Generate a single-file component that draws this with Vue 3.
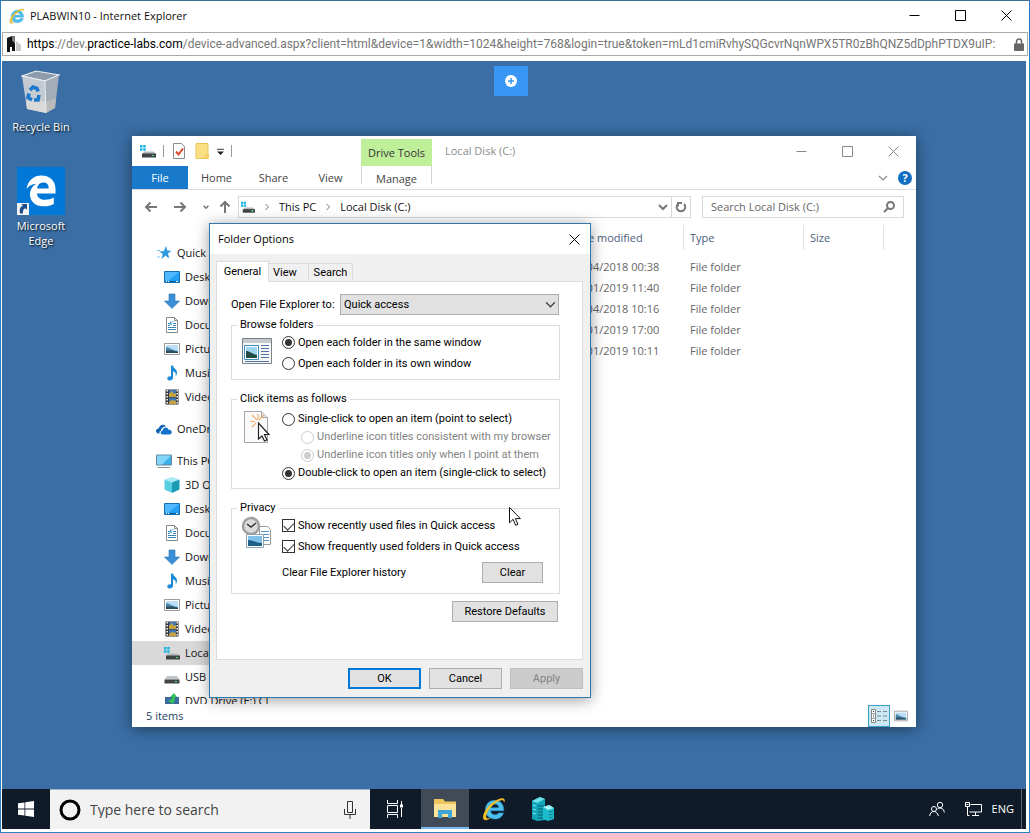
<template>
  <div class="browser">
    <svg class="sprite" aria-hidden="true">
      <symbol id="i-ie" viewBox="1 1.500 22 21">
        <path d="M21 13.600H8.900c.2 2.300 1.800 3.700 4 3.700 1.500 0 2.600-.6 3.200-1.700h4.600c-1 3.400-4 5.600-8 5.600-5 0-8.600-3.500-8.600-8.500S7.800 4 12.700 4s8.400 3.700 8.300 9.600zM8.900 10.800h7.600c-.2-2-1.700-3.300-3.700-3.300s-3.500 1.300-3.900 3.300z" fill="#4cc0ee" stroke="#2a93c9" stroke-width=".5" />
        <path d="M21.500 5.500c.6-2.200-.4-3.500-2.700-3.100C14 3.200 6.500 8.600 3.600 14.600c-2.100 4.200-1.900 7.300.6 7.400 1.300 0 2.700-.6 4-1.600-4 1.300-4.300-1.500-2.500-5.300C8.300 9.800 14.700 4.400 18.800 3.700c1.300-.2 2.200.3 2.700 1.800z" fill="#f6c62d" stroke="#e0ac22" stroke-width=".5" />
      </symbol>
      <symbol id="i-star" viewBox="0 0 16 16">
        <path d="M10 1l1.300 4.500 4.200.3-3.500 2.700 1.300 4.900-3.900-2.600-4 3.200 1.300-5-3.300-2.600 4.400-.4z" fill="#2f9ae0" />
        <path d="M1 5.500h3M1 12h3" stroke="#7cc0ee" />
      </symbol>
      <symbol id="i-desktop" viewBox="0 0 16 16">
        <path d="M.5 2.500h15v11H.5z" fill="#1fa0f5" stroke="#1672b8" />
        <path d="M1 3h14L3 13H1z" fill="#4db8ff" />
        <path d="M1 12.500h14" stroke="#0a5c9f" /><path d="M2 12.500h1m1 0h1m7 0h2" stroke="#fff" />
      </symbol>
      <symbol id="i-down" viewBox="0 0 16 16">
        <path d="M5 1h6v7h4.500L8 15.500.5 8H5z" fill="#3b8fd6" stroke="#2a73b5" stroke-width=".6" />
      </symbol>
      <symbol id="i-docs" viewBox="0 0 16 16">
        <path d="M2.500.5h8l3 3v12h-11z" fill="#fff" stroke="#8a8a8a" />
        <path d="M10.500.5v3h3" fill="none" stroke="#8a8a8a" />
        <path d="M4 6.500h2M4 8.500h2M4 10.500h8M4 12.500h8M8.500 4.500h1M9 6.500h3M9 8.500h3" stroke="#3a87b8" />
        <path d="M5 7l2-3 1 4z" fill="#2e9ad2" />
      </symbol>
      <symbol id="i-pics" viewBox="0 0 16 16">
        <path d="M.5 2.500h15v11H.5z" fill="#fff" stroke="#9b9b9b" />
        <path d="M2 4h12v8H2z" fill="#b9def5" />
        <path d="M2 6c3 0 5 3 12 4v2H2z" fill="#4d86ac" /><path d="M2 10c4-1 8 0 12 1v1H2z" fill="#2a4c5b" />
      </symbol>
      <symbol id="i-music" viewBox="0 0 16 16">
        <path d="M7 .5h2c.4 3 4.500 3.500 4 8-.2 1.200-.6 2-1.300 2.700.7-3-.7-4.200-2.700-4.600V13c0 1.600-1.800 2.700-3.600 2.500C3.700 15.300 3 14.300 3.300 13c.4-1.500 2.200-2.200 3.700-1.700z" fill="#1d8bd8" />
      </symbol>
      <symbol id="i-video" viewBox="0 0 16 16">
        <path d="M1.500.5h13v15h-13z" fill="#333" />
        <path d="M5 1h7v7H5zM5 8.500h7V15H5z" fill="#4176b3" />
        <path d="M5 5l3-3 2 3 2-1v4H5zM5 13l3-2 4 1v3H5z" fill="#c9a23f" />
        <path d="M3.200 1v14M13.200 1v14" stroke="#f2f2f2" stroke-width="1.600" stroke-dasharray="1.500 1.500" />
      </symbol>
      <symbol id="i-cloud" viewBox="0 0 16 16">
        <path d="M2 12.500c-3-1-2.400-4.800.7-5C3.500 3.500 8 2.500 10 5.500 7 5.500 5 7.500 5 9.500c-1.500.6-2 2-1.300 3z" fill="#0f62b5" />
        <path d="M6.500 13.500c-2.600-.6-2.400-3.800.2-4C7 6 11.500 5.500 12.500 8.700c3.600-.6 4.600 4.300 1 4.800z" fill="#1272cc" />
      </symbol>
      <symbol id="i-pc" viewBox="0 0 16 16">
        <path d="M.5 2h15v10H.5z" fill="#3cb2ea" stroke="#68839a" />
        <path d="M1 2.500h14L6 11.500H1z" fill="#85d5f8" />
        <path d="M2 14.500h12" stroke="#8195a6" />
      </symbol>
      <symbol id="i-cube" viewBox="0 0 16 16">
        <path d="M8 0l7.500 2.500L8 5.500.5 2.500z" fill="#a8ecf3" />
        <path d="M.5 2.500L8 5.500V16L.5 12.500z" fill="#58cfe0" /><path d="M15.500 2.500L8 5.500V16l7.500-3.500z" fill="#1a9ab3" />
      </symbol>
      <symbol id="i-drive" viewBox="0 0 16 16">
        <path d="M0 2h2.500v2.500H0zM3.200 2h2.500v2.500H3.200zM0 5.200h2.500v2.500H0zM3.200 5.200h2.500v2.500H3.200z" fill="#19b5e5" />
        <path d="M4 8.500h9.500l2.500 2.500H2.500z" fill="#b3b7ba" /><path d="M2 10.500h14v4H2z" fill="#3d4245" />
        <path d="M12 12.500h2" stroke="#4be36a" />
      </symbol>
      <symbol id="i-usb" viewBox="0 0 16 16">
        <path d="M3 7h10l2.500 3.500H.5z" fill="#c2c5c7" /><path d="M.5 10.500h15v4H.5z" fill="#3f4447" />
        <path d="M11 12.500h2" stroke="#4be36a" />
      </symbol>
      <symbol id="i-dvd" viewBox="0 0 16 16">
        <path d="M1 4h14v11H1z" fill="#3b6c9d" /><path d="M10 0l3 4h-2c0 4-1 6-3 7L4 7h3l1-3H6z" fill="#34c159" />
      </symbol>
      <symbol id="i-chevron" viewBox="0 0 10 10">
        <path d="M1 3l4 4 4-4" fill="none" stroke="currentColor" stroke-width="1.200" />
      </symbol>
      <symbol id="i-cursor" viewBox="0 0 12 20">
        <path d="M.5.500v15.300l3.600-3.500 2.500 6 2.300-1-2.500-5.700h5z" fill="#fff" stroke="#111" />
      </symbol>
    </svg>

    <header class="titlebar">
      <svg class="ic16"><use href="#i-ie" /></svg>
      <h1 class="titlebar__text">PLABWIN10 - Internet Explorer</h1>
      <div class="captions">
        <button v-for="c in captions" :key="c.name" type="button" :aria-label="c.name">
          <svg viewBox="0 0 11 11"><path :d="c.path" /></svg>
        </button>
      </div>
    </header>

    <div class="address">
      <svg class="address__logo" viewBox="0 0 14 16">
        <path d="M0 2l5-2v4l3 3v8H5v-4H3v5H0z" fill="#111" /><path d="M5 0h3v7L5 4z" fill="#777" />
        <path d="M9 5l5 4v6H9z" fill="#c9c9c9" />
      </svg>
      <p class="address__url">
        <b>https</b>://dev.<b>practice-labs.com</b>/device-advanced.aspx?client=html&amp;device=1&amp;width=1024&amp;height=768&amp;login=true&amp;token=mLd1cmiRvhySQGcvrNqnWPX5TR0zBhQNZ5dDphPTDX9uIP:
      </p>
      <svg class="address__lock" viewBox="0 0 10 13">
        <path d="M2.500 6V3.500a2.500 2.500 0 015 0V6" fill="none" stroke="#666" stroke-width="1.500" />
        <path d="M0 5.500h10V12a1 1 0 01-1 1H1a1 1 0 01-1-1z" fill="#666" />
      </svg>
    </div>

    <main class="screen">
      <div class="desktop">
        <button class="connect" type="button" aria-label="Open menu">
          <svg viewBox="0 0 12 12"><circle cx="6" cy="6" r="6" fill="#fff" /><path d="M6 3v6M3 6h6" stroke="#3a96f5" stroke-width="1.500" /></svg>
        </button>

        <div class="shortcuts">
          <a class="shortcut" href="#bin">
            <svg class="shortcut__bin" viewBox="0 0 40 44">
              <path d="M1 6L15 1l23 4-14 6z" fill="#8e9cab" stroke="#e9eef2" stroke-width="1.200" />
              <path d="M1 6l23 5 1 32-19-4z" fill="#c3cad2" /><path d="M38 5L24 11l1 32 9-5z" fill="#a3adb7" />
              <path d="M5 31l8-2 12 3v11L6 39z" fill="#dedcdb" opacity=".8" /><path d="M25 32l10-4-1 10-9 5z" fill="#c1bfbd" opacity=".8" />
              <path d="M1 6l23 5 14-6M24 11l1 32" fill="none" stroke="#e9eef2" />
              <g fill="none" stroke="#1a79cd" stroke-width="3.600"><path d="M9 20l3-3 4 1.500 1 3" /><path d="M8 23.500l-1 4 4 2.500" /><path d="M18 25l-1 5h-4" /></g>
            </svg>
            <span>Recycle Bin</span>
          </a>
          <a class="shortcut" href="#edge">
            <svg class="shortcut__edge" viewBox="0 0 48 48">
              <path d="M0 0h48v48H0z" fill="#0078d7" />
              <path d="M9.500 22C11 13 17 8.500 24.500 8.500 33 8.500 38.500 14 38.500 22v4.500H20c.2 4.200 3.600 6.300 8.200 6.300 3.300 0 6.100-.7 8.600-2.200v6.300c-2.800 1.600-6.200 2.400-10.200 2.400-8.300 0-13.600-4.700-13.600-12 0-4.300 2.200-8.200 6.300-10.600-4.100.3-7.400 2-9.800 5.300zm10.700-.6h11.500c0-3.800-2-5.800-5.500-5.800-3.300 0-5.500 2.300-6 5.800z" fill="#fff" />
              <path d="M0 36h12v12H0z" fill="#f3f3f3" /><path d="M3 46.500c-1-4 0-6.500 3-8l-1.800-1.500H10v5.800l-1.700-1.600c-2 1-2.800 2.500-2.300 5.300z" fill="#1f4e8c" />
            </svg>
            <span>Microsoft Edge</span>
          </a>
        </div>

        <section class="explorer">
          <div class="explorer__title">
            <div class="quick">
              <svg class="ic16"><use href="#i-drive" /></svg>
              <i class="sep"></i>
              <svg class="ic16" viewBox="0 0 16 16">
                <path d="M2.500.5h8l3 3v12h-11z" fill="#fff" stroke="#8a8a8a" /><path d="M5 8.500l2.500 3 4.500-6" fill="none" stroke="#d8492b" stroke-width="2" />
              </svg>
              <svg class="ic16" viewBox="0 0 16 16">
                <path d="M2 .500h12v15H2z" fill="#fbdf85" stroke="#e8c55c" /><path d="M11 11h4v4.500h-4z" fill="#f6d066" />
              </svg>
              <svg class="quick__more" viewBox="0 0 8 8"><path d="M0 1.500h8" stroke="#222" /><path d="M0 4h8L4 8z" fill="#222" /></svg>
              <i class="sep"></i>
            </div>
            <span class="context">Drive Tools</span>
            <h2>Local Disk (C:)</h2>
            <div class="captions captions--dim">
              <button v-for="c in captions" :key="c.name" type="button" :aria-label="c.name">
                <svg viewBox="0 0 11 11"><path :d="c.path" /></svg>
              </button>
            </div>
          </div>

          <nav class="ribbon">
            <button class="ribbon__file" type="button">File</button>
            <button type="button">Home</button>
            <button type="button">Share</button>
            <button type="button">View</button>
            <button class="ribbon__manage" type="button">Manage</button>
            <svg class="ribbon__chev"><use href="#i-chevron" /></svg>
            <button class="help" type="button">?</button>
          </nav>

          <div class="navrow">
            <button type="button" aria-label="Back"><svg viewBox="0 0 14 14"><path d="M13 7H2M6.500 2.500L2 7l4.500 4.500" /></svg></button>
            <button type="button" aria-label="Forward"><svg viewBox="0 0 14 14"><path d="M1 7h11M7.500 2.500L12 7l-4.500 4.500" /></svg></button>
            <button class="navrow__recent" type="button" aria-label="Recent"><svg viewBox="0 0 10 10"><path d="M2 3.500l3 3 3-3" /></svg></button>
            <button class="navrow__up" type="button" aria-label="Up"><svg viewBox="0 0 14 14"><path d="M7 13V2M2.500 6.500L7 2l4.500 4.500" /></svg></button>
            <div class="crumbs">
              <svg class="ic16"><use href="#i-drive" /></svg>
              <svg class="crumbs__sep" viewBox="0 0 6 8"><path d="M1.500 1l3 3-3 3" /></svg>
              <span>This PC</span>
              <svg class="crumbs__sep" viewBox="0 0 6 8"><path d="M1.500 1l3 3-3 3" /></svg>
              <span>Local Disk (C:)</span>
              <svg class="crumbs__drop" viewBox="0 0 10 10"><path d="M1 3l4 4 4-4" /></svg>
              <button class="crumbs__refresh" type="button" aria-label="Refresh">
                <svg viewBox="0 0 12 12"><path d="M3.500 2.500a4.300 4.300 0 105.500.5M3 5.500V2h4" /></svg>
              </button>
            </div>
            <label class="find">
              <input type="text" placeholder="Search Local Disk (C:)" aria-label="Search Local Disk (C:)" />
              <svg viewBox="0 0 12 12"><circle cx="7.500" cy="4.500" r="3.500" /><path d="M5 7L1 11" /></svg>
            </label>
          </div>

          <div class="explorer__body">
            <ul class="tree">
              <li v-for="(n, i) in tree" :key="i" :class="{ root: n.root, active: n.active }">
                <svg class="ic16"><use :href="'#i-' + n.icon" /></svg>
                <span>{{ n.label }}</span>
              </li>
            </ul>
            <table class="files">
              <thead>
                <tr><th class="files__name">Name</th><th>Date modified</th><th>Type</th><th class="files__size">Size</th></tr>
              </thead>
              <tbody>
                <tr v-for="d in dates" :key="d"><td></td><td>{{ d }}</td><td>File folder</td><td></td></tr>
              </tbody>
            </table>
          </div>

          <footer class="status">
            <span>5 items</span>
            <button class="status__on" type="button" aria-label="Details">
              <svg viewBox="0 0 18 14"><path d="M1.500.5h4v13h-4zM1.500 4.800h4M1.500 9.200h4" fill="#fff" stroke="#8a8a8a" /><path d="M3 2.500h1M3 7h1M3 11.500h1" stroke="#333" /><path d="M7 2.500h4M13 2.500h4M7 7h4M13 7h4M7 11.500h4M13 11.500h4" stroke="#7c8b92" /></svg>
            </button>
            <button type="button" aria-label="Large icons"><svg class="ic14"><use href="#i-pics" /></svg></button>
          </footer>
        </section>

        <form class="dialog" @submit.prevent>
          <div class="dialog__title">
            <h2>Folder Options</h2>
            <button type="button" aria-label="Close"><svg viewBox="0 0 11 11"><path d="M.5.500l10 10M10.500.500l-10 10" /></svg></button>
          </div>

          <div class="tabs">
            <button class="tabs__on" type="button">General</button>
            <button type="button">View</button>
            <button type="button">Search</button>
          </div>

          <div class="panel">
            <div class="openrow">
              <label for="open-to">Open File Explorer to:</label>
              <div class="select">
                <select id="open-to"><option>Quick access</option><option>This PC</option></select>
                <svg><use href="#i-chevron" /></svg>
              </div>
            </div>

            <fieldset class="group group--browse">
              <legend>Browse folders</legend>
              <svg class="group__icon" viewBox="0 0 32 36">
                <path d="M1.500 6.500h29v25h-29z" fill="#f6f8fa" stroke="#7c7f83" /><path d="M2 7h28v4H2z" fill="#c5cad0" />
                <path d="M3.500 13.500h14v14h-14z" fill="#fff" stroke="#3e8fb5" /><path d="M5 15h11v11H5z" fill="#9fd4ef" />
                <path d="M5 19c4 0 6 3 11 4v3H5z" fill="#244c46" /><path d="M20 13.500h8M20 16.500h8M20 19.500h8M20 22.500h8M20 25.500h8M4 29.500h24" stroke="#5470a8" />
              </svg>
              <div class="group__rows">
                <label><input v-model="browse" type="radio" name="browse" value="same" />Open each folder in the same window</label>
                <label><input v-model="browse" type="radio" name="browse" value="own" />Open each folder in its own window</label>
              </div>
            </fieldset>

            <fieldset class="group group--click">
              <legend>Click items as follows</legend>
              <svg class="group__icon" viewBox="0 0 32 36">
                <path d="M3.500 1.500h17l6 6v25h-23z" fill="#fafafa" stroke="#a6a6a6" /><path d="M20.500 1.500v6h6" fill="#e4e4e4" stroke="#a6a6a6" />
                <path d="M17 4v6M11 5l5 5M23 5l-5 5M9 11.500h5M11 17l4-4" stroke="#f0b070" stroke-width="1.200" />
                <path d="M17.500 13v16l3.500-3 2.500 5 2.500-1-2.500-5.500h4.500z" fill="#fff" stroke="#222" stroke-width="1.200" />
              </svg>
              <div class="group__rows">
                <label><input v-model="click" type="radio" name="click" value="single" />Single-click to open an item (point to select)</label>
                <label class="sub"><input v-model="underline" type="radio" name="underline" value="always" disabled />Underline icon titles consistent with my browser</label>
                <label class="sub"><input v-model="underline" type="radio" name="underline" value="hover" disabled />Underline icon titles only when I point at them</label>
                <label><input v-model="click" type="radio" name="click" value="double" />Double-click to open an item (single-click to select)</label>
              </div>
            </fieldset>

            <fieldset class="group group--privacy">
              <legend>Privacy</legend>
              <svg class="group__icon" viewBox="0 0 32 36">
                <path d="M18.500 11.500h8l3 3v15h-11z" fill="#fff" stroke="#999" /><path d="M20 16.500h8M20 19.500h8M20 22.500h8M20 25.500h8" stroke="#5b8fc0" />
                <circle cx="10" cy="11" r="8" fill="#dcdcdc" stroke="#a0a0a0" stroke-width="2.500" /><path d="M6 9l4 3 5-4" fill="none" stroke="#333" stroke-width="1.400" />
                <path d="M5.500 19.500h17v13h-17z" fill="#fff" stroke="#8ba3b3" /><path d="M7 21h14v10H7z" fill="#7fc1ea" />
                <path d="M7 25c5 0 8 3 14 3v3H7z" fill="#1f5f86" />
              </svg>
              <div class="group__rows">
                <label><input v-model="recent" type="checkbox" />Show recently used files in Quick access</label>
                <label><input v-model="frequent" type="checkbox" />Show frequently used folders in Quick access</label>
                <div class="clear"><span>Clear File Explorer history</span><button class="btn" type="button">Clear</button></div>
              </div>
            </fieldset>

            <button class="btn btn--restore" type="button">Restore Defaults</button>
          </div>

          <div class="dialog__foot">
            <button class="btn btn--ok" type="submit">OK</button>
            <button class="btn" type="button">Cancel</button>
            <button class="btn" type="button" disabled>Apply</button>
          </div>
        </form>

        <svg class="pointer"><use href="#i-cursor" /></svg>
      </div>

      <footer class="taskbar">
        <button class="taskbar__start" type="button" aria-label="Start">
          <svg viewBox="0 0 16 16"><path d="M0 2.300l6.500-.9v6.100H0zM7.300 1.300L16 0v7.500H7.300zM0 8.400h6.500v6.200L0 13.700zM7.300 8.400H16V16l-8.700-1.300z" fill="#fff" /></svg>
        </button>
        <label class="taskbar__search">
          <svg class="cortana" viewBox="0 0 22 22"><circle cx="11" cy="11" r="9" /></svg>
          <input type="text" placeholder="Type here to search" aria-label="Type here to search" />
          <svg class="mic" viewBox="0 0 12 18"><path d="M3.500.5h5v11h-5zM.5 8v5.500h11V8M6 13.500V18" /></svg>
        </label>
        <button class="taskbar__app" type="button" aria-label="Task view">
          <svg class="line" viewBox="0 0 18 18"><path d="M1.500 0v3.500h10V0M1.500 18v-3.500h10V18M1.500 5.500h10v7h-10zM15.500 1v4M15.500 8v9" /><path d="M14 4.500h3v3h-3z" fill="#fff" stroke="none" /></svg>
        </button>
        <button class="taskbar__app taskbar__app--on" type="button" aria-label="File Explorer">
          <svg class="big" viewBox="0 0 24 24"><path d="M1 3h9l2 2.500h11V21H1z" fill="#f1c75b" /><path d="M1 8h22v13H1z" fill="#fde29a" /><path d="M5 22v-8h14v8h-4v-4H9v4z" fill="#3fa4d8" /></svg>
        </button>
        <button class="taskbar__app" type="button" aria-label="Internet Explorer"><svg class="big"><use href="#i-ie" /></svg></button>
        <button class="taskbar__app" type="button" aria-label="Server Manager">
          <svg class="big" viewBox="0 0 24 24">
            <path d="M1 4l8-4 5 2v21l-8 1-5-2z" fill="#13a5b8" /><path d="M1 4l8-4 5 2-8 4z" fill="#6ee3ec" />
            <path d="M7 9h6M7 12h6M7 15h6M7 18h6M7 21h6" stroke="#085e70" /><path d="M2 8l3 1M2 12l3 1M2 16l3 1" stroke="#7feaf2" />
            <path d="M12 10l6-2 5 3v11l-6 2-5-2z" fill="#1cbccb" /><path d="M12 10l6-2 5 3-6 2z" fill="#a3f2f6" />
            <path d="M18 15l4-1M18 18l4-1M18 21l4-1" stroke="#07798b" />
          </svg>
        </button>
        <div class="tray">
          <svg class="people" viewBox="0 0 16 16"><circle cx="11" cy="4" r="2.700" /><circle cx="5" cy="8" r="2.500" /><path d="M.7 15c.5-6 7.700-6 8.600 0M8.500 8c3-2 6.500-.5 6.800 3.500" /></svg>
          <svg class="net" viewBox="0 0 17 14"><path d="M5.500 2.500h11v7.500h-12M10.500 10v3M7 13.500h7M.5.500h4v4h-4zM2.500 4.500v9h2M1.500 2.500h2" /></svg>
          <span>ENG</span>
        </div>
      </footer>
    </main>
  </div>
</template>

<script setup>
import { ref } from "vue";

const captions = [
  { name: "Minimize", path: "M.5 5.500h10" },
  { name: "Maximize", path: "M.5.500h10v10H.5z" },
  { name: "Close", path: "M.5.500l10 10M10.500.500l-10 10" },
];

const tree = [
  { label: "Quick access", icon: "star", root: true },
  { label: "Desktop", icon: "desktop" },
  { label: "Downloads", icon: "down" },
  { label: "Documents", icon: "docs" },
  { label: "Pictures", icon: "pics" },
  { label: "Music", icon: "music" },
  { label: "Videos", icon: "video" },
  { label: "OneDrive", icon: "cloud", root: true },
  { label: "This PC", icon: "pc", root: true },
  { label: "3D Objects", icon: "cube" },
  { label: "Desktop", icon: "desktop" },
  { label: "Documents", icon: "docs" },
  { label: "Downloads", icon: "down" },
  { label: "Music", icon: "music" },
  { label: "Pictures", icon: "pics" },
  { label: "Videos", icon: "video" },
  { label: "Local Disk (C:)", icon: "drive", active: true },
  { label: "USB Drive", icon: "usb" },
  { label: "DVD Drive (E:) CI", icon: "dvd" },
];

const dates = [
  "12/04/2018 00:38",
  "21/01/2019 11:40",
  "12/04/2018 10:16",
  "21/01/2019 17:00",
  "22/01/2019 10:11",
];

const browse = ref("same");
const click = ref("double");
const underline = ref("hover");
const recent = ref(true);
const frequent = ref(true);
</script>

<style>
body {
  margin: 0;
}
</style>

<style scoped>
* {
  box-sizing: border-box;
}

h1,
h2,
p,
ul {
  margin: 0;
  padding: 0;
  font-weight: 400;
  list-style: none;
}

button,
input,
select {
  font: inherit;
  color: inherit;
  border: 0;
  margin: 0;
  padding: 0;
  background: none;
  border-radius: 0;
}

svg {
  display: block;
  flex: none;
}

.sprite {
  position: absolute;
  width: 0;
  height: 0;
}

.ic16 {
  width: 16px;
  height: 16px;
}

.ic14 {
  width: 14px;
  height: 14px;
}

/* Browser frame */
.browser {
  display: flex;
  flex-direction: column;
  height: 100vh;
  min-height: 800px;
  border: 1px solid #2b7fc0;
  border-top-color: #3d7296;
  background: #fff;
  font-family: "Open Sans", "Noto Sans", sans-serif;
  font-size: 11px;
  line-height: 16px;
  color: #111;
}

.titlebar {
  display: flex;
  align-items: center;
  height: 31px;
  padding: 0 0 2px 8px;
}

.titlebar__text {
  flex: 1;
  margin-left: 5px;
  font-size: 11px;
}

.captions {
  display: flex;
}

.captions button {
  display: grid;
  place-items: center;
  width: 46px;
  height: 28px;
}

.captions svg {
  width: 11px;
  height: 11px;
  fill: none;
  stroke: #000;
}

.captions--dim svg {
  stroke: #888;
}

.address {
  display: flex;
  align-items: center;
  height: 24px;
  margin: 0 1px 5px;
  padding: 0 3px 0 4px;
  border: 1px solid #a9a9a9;
}

.address__logo {
  width: 14px;
  height: 16px;
}

.address__url {
  flex: 1;
  overflow: hidden;
  margin-left: 6px;
  font-family: Roboto, "Open Sans", sans-serif;
  font-size: 12px;
  white-space: nowrap;
  color: #767676;
}

.address__url b {
  font-weight: 400;
  color: #000;
}

.address__lock {
  width: 10px;
  height: 13px;
}

.screen {
  display: flex;
  flex: 1;
  flex-direction: column;
  margin: 0 3px 3px 1px;
}

.desktop {
  position: relative;
  flex: 1;
  overflow: hidden;
  background: #3a6ea5;
}

.connect {
  position: absolute;
  top: 5px;
  left: 492px;
  display: grid;
  place-items: center;
  width: 34px;
  height: 30px;
  background: #3a96f5;
}

.connect svg {
  width: 12px;
  height: 12px;
}

/* Desktop shortcuts */
.shortcuts {
  position: absolute;
  top: 9px;
  left: 1px;
}

.shortcut {
  display: flex;
  flex-direction: column;
  align-items: center;
  width: 76px;
  height: 97px;
  color: #fff;
  line-height: 15px;
  text-align: center;
  text-decoration: none;
  text-shadow: 1px 1px 2px #000;
}

.shortcut__bin {
  width: 40px;
  height: 44px;
  margin-bottom: 5px;
}

.shortcut__edge {
  width: 48px;
  height: 48px;
  margin-bottom: 3px;
}

.shortcut span {
  max-width: 64px;
}

/* File Explorer window */
.explorer {
  position: absolute;
  top: 75px;
  left: 130px;
  display: flex;
  flex-direction: column;
  width: 784px;
  height: 591px;
  background: #fff;
  box-shadow: 0 2px 14px rgba(0, 0, 0, 0.45);
}

.explorer__title {
  display: flex;
  align-items: center;
  height: 30px;
}

.explorer__title h2 {
  flex: 1;
  margin-left: 13px;
  font-size: 11px;
  color: #8c8c8c;
}

.quick {
  display: flex;
  align-items: center;
  gap: 7px;
  width: 229px;
  padding-left: 8px;
}

.sep {
  width: 1px;
  height: 12px;
  background: #999;
}

.quick__more {
  width: 7px;
  height: 7px;
}

.context {
  align-self: flex-end;
  width: 71px;
  height: 27px;
  line-height: 28px;
  text-align: center;
  background: #c0ef9a;
  color: #333;
}

.ribbon {
  display: flex;
  align-items: center;
  height: 24px;
  border-bottom: 1px solid #dcdcdc;
  color: #444;
}

.ribbon > button {
  width: 57px;
  height: 23px;
}

.ribbon > .ribbon__file {
  width: 56px;
  background: #1979ca;
  color: #fff;
}

.ribbon > .ribbon__manage {
  align-self: flex-start;
  width: 71px;
  height: 18px;
  margin-left: 2px;
  padding-top: 5px;
  border: solid #d5d5d5;
  border-width: 0 1px;
}

.ribbon__chev {
  width: 10px;
  height: 10px;
  margin-left: auto;
  color: #888;
}

.ribbon > .help {
  width: 14px;
  height: 14px;
  margin: 0 4px 0 10px;
  border-radius: 50%;
  background: #0f6ec4;
  color: #fff;
  font-weight: 700;
  line-height: 14px;
}

.navrow {
  display: flex;
  align-items: center;
  height: 34px;
  padding: 0 12px;
}

.navrow svg {
  width: 14px;
  height: 14px;
  fill: none;
  stroke: #777;
  stroke-width: 2;
}

.navrow > button {
  width: 14px;
  margin-right: 15px;
}

.navrow > .navrow__recent {
  width: 8px;
  margin-right: 8px;
}

.navrow .navrow__recent svg {
  width: 8px;
  height: 8px;
}

.navrow > .navrow__up {
  margin-right: 6px;
}

.crumbs {
  display: flex;
  flex: 1;
  align-items: center;
  height: 22px;
  padding-left: 2px;
  border: 1px solid #d9d9d9;
}

.crumbs .ic16 {
  stroke: none;
}

.crumbs .crumbs__sep {
  width: 6px;
  height: 8px;
  margin: 0 9px;
  stroke-width: 1;
}

.crumbs .crumbs__drop {
  width: 10px;
  height: 10px;
  margin-left: auto;
}

.crumbs__refresh {
  display: grid;
  place-items: center;
  width: 19px;
  height: 20px;
  margin-left: 3px;
  border-left: 1px solid #d9d9d9;
}

.navrow .crumbs__refresh svg {
  width: 12px;
  height: 12px;
}

.find {
  display: flex;
  align-items: center;
  width: 202px;
  height: 22px;
  margin-left: 11px;
  padding: 0 8px;
  border: 1px solid #d9d9d9;
}

.find input {
  flex: 1;
  min-width: 0;
}

.find input::placeholder {
  color: #666;
  opacity: 1;
}

.navrow .find svg {
  width: 12px;
  height: 12px;
}

.explorer__body {
  display: flex;
  flex: 1;
  min-height: 0;
}

.tree {
  width: 156px;
  padding-top: 17px;
  overflow: hidden;
}

.tree li {
  display: flex;
  align-items: center;
  gap: 5px;
  height: 24px;
  padding-left: 32px;
  white-space: nowrap;
}

.tree .root {
  gap: 5px;
  padding-left: 24px;
}

.tree li + .root {
  margin-top: 8px;
}

.tree .active {
  background: #d9d9d9;
}

.files {
  align-self: flex-start;
  width: 596px;
  margin-top: 1px;
  border-spacing: 0;
  table-layout: fixed;
  color: #666;
}

.files th {
  width: 120px;
  height: 25px;
  padding: 0 0 0 6px;
  border-right: 1px solid #e2e2e2;
  font-weight: 400;
  text-align: left;
  color: #4c607a;
}

.files .files__name {
  width: 276px;
}

.files .files__size {
  width: 80px;
}

.files tbody::before {
  display: block;
  height: 6px;
  content: "";
}

.files td {
  height: 21px;
  padding: 0 0 0 6px;
}

.status {
  display: flex;
  align-items: center;
  height: 23px;
  padding: 0 4px 0 14px;
  color: #26405f;
}

.status span {
  flex: 1;
}

.status button {
  display: grid;
  place-items: center;
  width: 22px;
  height: 22px;
}

.status__on svg {
  width: 18px;
  height: 14px;
}

.status .status__on {
  border: 1px solid #3aa0c8;
  background: #cce8f4;
}

/* Folder Options dialog */
.dialog {
  position: absolute;
  top: 162px;
  left: 207px;
  width: 382px;
  padding-bottom: 8px;
  border: 1px solid #2f77ad;
  background: #f0f0f0;
  box-shadow: 0 2px 14px rgba(0, 0, 0, 0.4);
  font-family: Roboto, "Liberation Sans", sans-serif;
  font-size: 11px;
  line-height: 14px;
  color: #000;
}

.dialog__title {
  display: flex;
  align-items: center;
  justify-content: space-between;
  height: 30px;
  padding: 0 10px 0 8px;
  background: #fff;
}

.dialog__title h2 {
  font-family: "Open Sans", sans-serif;
  font-size: 11px;
}

.dialog__title svg {
  width: 11px;
  height: 11px;
  stroke: #000;
}

.tabs {
  display: flex;
  align-items: flex-end;
  height: 27px;
  padding-left: 6px;
}

.tabs button {
  width: 44px;
  height: 18px;
  border: 1px solid #dcdcdc;
  border-bottom: 0;
  border-left: 0;
}

.tabs button:nth-child(2) {
  width: 40px;
  padding-left: 4px;
  text-align: left;
}

.tabs .tabs__on {
  position: relative;
  width: 53px;
  height: 21px;
  margin-bottom: -1px;
  border-left: 1px solid #dcdcdc;
  background: #fff;
}

.panel {
  display: flex;
  flex-direction: column;
  height: 379px;
  margin: 0 7px 0 6px;
  padding: 12px 22px 0 14px;
  border: 1px solid #dcdcdc;
  background: #fff;
}

.openrow {
  display: flex;
  align-items: center;
  justify-content: space-between;
  margin-right: 1px;
}

.select {
  position: relative;
  width: 219px;
}

.select select {
  display: block;
  width: 100%;
  height: 21px;
  padding-left: 3px;
  border: 1px solid #adadad;
  background: #e1e1e1;
  appearance: none;
}

.select svg {
  position: absolute;
  top: 5px;
  right: 3px;
  width: 11px;
  height: 11px;
  color: #444;
  pointer-events: none;
}

.group {
  display: flex;
  min-width: 0;
  margin: 3px 0 0;
  padding: 0 16px 5px 9px;
  border: 1px solid #dcdcdc;
}

.group legend {
  margin-left: -4px;
  padding: 0 3px;
}

.group--click {
  margin-top: 12px;
  padding-top: 4px;
  padding-bottom: 6px;
}

.group--privacy {
  margin-top: 12px;
  padding-bottom: 10px;
}

.group__icon {
  width: 32px;
  height: 36px;
}

.group__rows {
  flex: 1;
  margin-left: 9px;
}

.group__rows label {
  display: flex;
  align-items: center;
  gap: 3px;
  height: 21px;
  white-space: nowrap;
}

.group--click label {
  height: 18px;
}

.group .sub {
  margin-left: 19px;
  color: #838383;
}

.group input {
  display: grid;
  flex: none;
  place-items: center;
  width: 13px;
  height: 13px;
  border: 1px solid #333;
  background: #fff;
  appearance: none;
}

.group input[type="radio"] {
  border-radius: 50%;
}

.group input[type="radio"]:checked::before {
  width: 7px;
  height: 7px;
  border-radius: 50%;
  background: #333;
  content: "";
}

.group input:disabled {
  border-color: #ccc;
}

.group input[type="radio"]:disabled::before {
  background: #ccc;
}

.group input[type="checkbox"]:checked::before {
  width: 9px;
  height: 5px;
  border: solid #333;
  border-width: 0 0 1px 1px;
  transform: translateY(-1px) rotate(-45deg);
  content: "";
}

.clear {
  display: flex;
  align-items: center;
  justify-content: space-between;
  margin-top: 5px;
}

.btn {
  width: 73px;
  height: 21px;
  border: 1px solid #adadad;
  background: #e1e1e1;
}

.clear .btn {
  width: 61px;
}

.btn--restore {
  align-self: flex-end;
  width: 106px;
  margin: 7px 2px 0 0;
}

.btn--ok {
  border: 2px solid #0078d7;
}

.btn:disabled {
  border-color: #bfbfbf;
  background: #ccc;
  color: #838383;
}

.dialog__foot {
  display: flex;
  justify-content: flex-end;
  gap: 8px;
  margin: 8px 7px 0;
}

.pointer {
  position: absolute;
  top: 446px;
  left: 507px;
  width: 12px;
  height: 20px;
}

/* Taskbar */
.taskbar {
  display: flex;
  height: 40px;
  background: #101b2a;
  color: #fff;
}

.taskbar button {
  display: grid;
  place-items: center;
  width: 49px;
}

.taskbar .taskbar__start {
  width: 48px;
}

.taskbar__start svg {
  width: 16px;
  height: 16px;
}

.taskbar__search {
  display: flex;
  align-items: center;
  width: 320px;
  padding: 0 14px 0 9px;
  border-top: 1px solid #9fb6cc;
  background: #f2f2f2;
}

.cortana {
  width: 22px;
  height: 22px;
  fill: none;
  stroke: #000;
  stroke-width: 3;
}

.taskbar__search input {
  flex: 1;
  min-width: 0;
  margin-left: 9px;
  font-size: 14px;
}

.taskbar__search input::placeholder {
  color: #444;
  opacity: 1;
}

.mic,
.line,
.people,
.net {
  width: 12px;
  height: 18px;
  fill: none;
  stroke: #333;
}

.line {
  width: 18px;
  height: 18px;
  stroke: #fff;
}

.big {
  width: 24px;
  height: 24px;
}

.taskbar .taskbar__app--on {
  width: 48px;
  margin-left: 2px;
  border-bottom: 2px solid #76b9ed;
  background: #404b57;
}

.tray {
  display: flex;
  align-items: center;
  gap: 20px;
  margin-left: auto;
  margin-right: 4px;
  padding-right: 7px;
  border-right: 1px solid #5c6570;
}

.tray span {
  margin-left: -10px;
}

.people {
  width: 16px;
  height: 16px;
  stroke: #fff;
}

.net {
  width: 17px;
  height: 14px;
  stroke: #fff;
}
</style>
